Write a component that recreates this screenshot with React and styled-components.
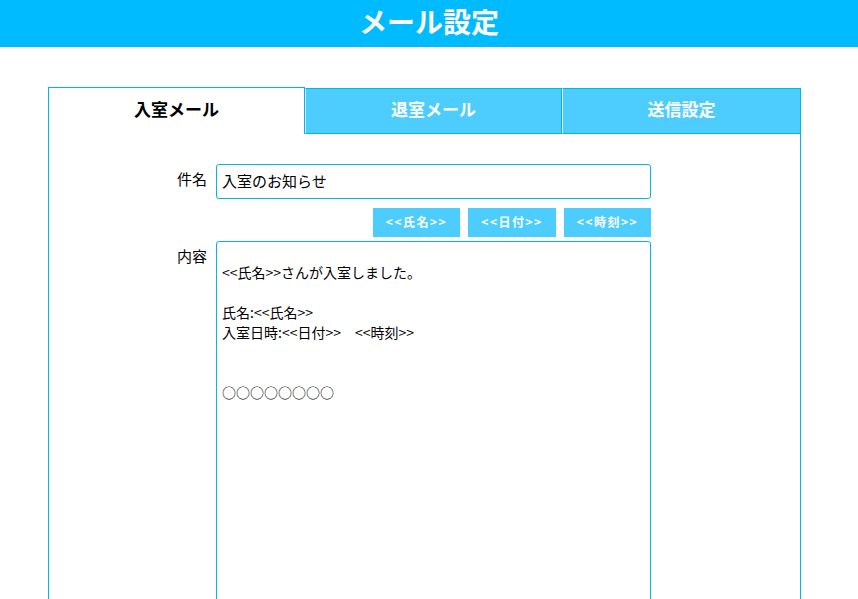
import React from "react";
import styled, { createGlobalStyle } from "styled-components";

const Global = createGlobalStyle`
  html, body { margin: 0; padding: 0; background: #fff; overflow: hidden; }
  body { font-family: "Noto Sans CJK JP", "Noto Sans", sans-serif; }
`;

const Header = styled.header`
  height: 47px;
  background: #00bbff;
  color: #fff;
  font-size: 28px;
  font-weight: 700;
  display: flex;
  align-items: center;
  justify-content: center;
  line-height: 1;
  padding-bottom: 6px;
  box-sizing: border-box;
`;

const Panel = styled.div`
  margin: 40px 57px 0 48px;
`;

const Tabs = styled.div`
  display: grid;
  grid-template-columns: 257px 257px 1fr;
  height: 47px;
`;

const Tab = styled.div`
  display: flex;
  align-items: center;
  justify-content: center;
  padding-bottom: 5px;
  font-size: 17px;
  font-weight: 700;
  box-sizing: border-box;
  color: ${(p) => (p.$active ? "#000" : "#fff")};
  background: ${(p) => (p.$active ? "#fff" : "#4dcdfd")};
  border: 1px solid #00b4f0;
  border-bottom: ${(p) => (p.$active ? "none" : "1px solid #00b4f0")};
  ${(p) => (!p.$active && !p.$first ? "border-left: 1px solid #e8f8ff;" : "")}
  ${(p) => (p.$active ? "" : "margin-top: 1px;")}
`;

const Body = styled.div`
  border: 1px solid #00b4f0;
  border-top: none;
  height: 470px;
  padding-top: 30px;
  box-sizing: border-box;
`;

const Row = styled.div`
  display: grid;
  grid-template-columns: 158px 435px;
  column-gap: 9px;
  margin-bottom: ${(p) => p.$mb || 0}px;
`;

const Label = styled.label`
  text-align: right;
  font-size: 15px;
  color: #000;
  padding-top: 4px;
`;

const Input = styled.input`
  height: 35px;
  box-sizing: border-box;
  border: 1px solid #00b4f0;
  border-radius: 3px;
  font: 15px "Noto Sans CJK JP", sans-serif;
  padding: 0 5px 2px;
  outline: none;
`;

const Buttons = styled.div`
  grid-column: 2;
  display: flex;
  justify-content: flex-end;
  gap: 8px;
`;

const TagButton = styled.button`
  width: ${(p) => p.$w}px;
  height: 29px;
  background: #4dcdfd;
  color: #fff;
  border: none;
  font: 700 12px "Noto Sans CJK JP", sans-serif;
  letter-spacing: 1.5px;
  padding: 0 0 2px;
`;

const TextArea = styled.textarea`
  height: 400px;
  box-sizing: border-box;
  border: 1px solid #00b4f0;
  border-radius: 3px;
  font: 14px/20px "Noto Sans CJK JP", sans-serif;
  padding: 0 5px;
  resize: none;
  outline: none;
`;

const content = "\n<<氏名>>さんが入室しました。\n\n氏名:<<氏名>>\n入室日時:<<日付>>　<<時刻>>\n\n\n○○○○○○○○";

export default function App() {
  return (
    <>
      <Global />
      <Header>メール設定</Header>
      <Panel>
        <Tabs>
          <Tab $active $first>入室メール</Tab>
          <Tab>退室メール</Tab>
          <Tab>送信設定</Tab>
        </Tabs>
        <Body>
          <Row $mb={9}>
            <Label>件名</Label>
            <Input defaultValue="入室のお知らせ" />
          </Row>
          <Row $mb={4}>
            <Buttons>
              <TagButton $w={87}>&lt;&lt;氏名&gt;&gt;</TagButton>
              <TagButton $w={88}>&lt;&lt;日付&gt;&gt;</TagButton>
              <TagButton $w={87}>&lt;&lt;時刻&gt;&gt;</TagButton>
            </Buttons>
          </Row>
          <Row>
            <Label>内容</Label>
            <TextArea defaultValue={content} />
          </Row>
        </Body>
      </Panel>
    </>
  );
}
